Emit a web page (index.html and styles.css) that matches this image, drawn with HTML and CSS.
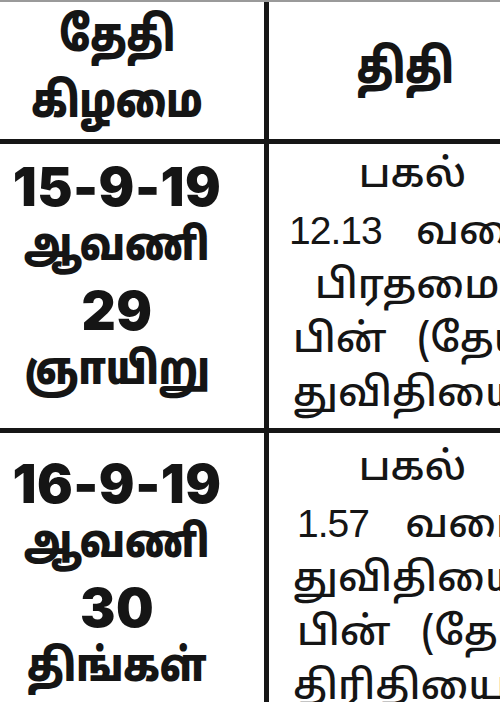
FILE: index.html
```html
<!DOCTYPE html>
<html lang="ta">
<head>
<meta charset="utf-8">
<title>தேதி திதி</title>
<link rel="stylesheet" href="styles.css">
</head>
<body>
<div class="sheet">
  <div class="row head">
    <div class="cell left">
      <div class="hd"><span class="sq">தேதி</span></div>
      <div class="hd"><span class="sq">கிழமை</span></div>
    </div>
    <div class="cell right">
      <div class="hd"><span class="sq">திதி</span></div>
    </div>
  </div>
  <div class="row body first">
    <div class="cell left">
      <div class="num">15-9-19</div>
      <div class="tb"><span class="sq">ஆவணி</span></div>
      <div class="num">29</div>
      <div class="tb"><span class="sq">ஞாயிறு</span></div>
    </div>
    <div class="cell right">
      <div class="tr ctr">பகல்</div>
      <div class="tr wide"><span class="dg">12.13</span> வரை</div>
      <div class="tr ind">பிரதமை</div>
      <div class="tr mid">பின் (தேய்பிறை)</div>
      <div class="tr">துவிதியை</div>
    </div>
  </div>
  <div class="row body last">
    <div class="cell left">
      <div class="num">16-9-19</div>
      <div class="tb"><span class="sq">ஆவணி</span></div>
      <div class="num">30</div>
      <div class="tb"><span class="sq">திங்கள்</span></div>
    </div>
    <div class="cell right">
      <div class="tr ctr">பகல்</div>
      <div class="tr wider nudge"><span class="dg">1.57</span> வரை</div>
      <div class="tr">துவிதியை</div>
      <div class="tr mid nudge">பின் (தேய்பிறை)</div>
      <div class="tr">திரிதியை</div>
    </div>
  </div>
</div>
</body>
</html>
```
FILE: styles.css
```css
html, body {
  margin: 0;
  padding: 0;
  background: #fff;
  overflow: hidden;
}
body {
  width: 500px;
  height: 702px;
  color: #151515;
  font-family: "Noto Sans Tamil", "Lohit Tamil", "FreeSans", "Noto Sans", sans-serif;
}
.sheet {
  width: 560px;
  border-top: 2px solid #9a9a9a;
}
.row {
  display: grid;
  grid-template-columns: 264px 292px;
}
.head {
  height: 137px;
  border-bottom: 5px solid #161616;
}
.body {
  height: 284px;
  border-bottom: 5px solid #161616;
}
.last {
  border-bottom: none;
}
.cell {
  display: flex;
  flex-direction: column;
}
.left {
  align-items: center;
  padding-right: 30px;
  text-align: center;
}
.right {
  border-left: 5px solid #161616;
}
.head .cell {
  justify-content: center;
}
.head .left {
  padding-top: 2px;
}
.head .right {
  align-items: center;
  padding-right: 14px;
}
.sq {
  display: inline-block;
  transform: scaleX(0.84);
  white-space: nowrap;
}
.hd {
  font-weight: 900;
  font-size: 48px;
  line-height: 66px;
}
.hd .sq {
  transform: scaleX(0.78);
}
.body .left {
  padding-top: 12px;
}
.last .left {
  padding-top: 20px;
}
.num {
  font-family: "Inter", "Liberation Sans", sans-serif;
  font-weight: 900;
  font-size: 53px;
  line-height: 62px;
  letter-spacing: 0.5px;
}
.tb {
  font-weight: 900;
  font-size: 45px;
  line-height: 62px;
}
.body .right {
  padding-top: 6px;
  padding-left: 24px;
}
.last .right {
  padding-top: 10px;
}
.tr {
  font-size: 40px;
  font-weight: 500;
  line-height: 54px;
  white-space: nowrap;
}
.ctr {
  text-align: center;
  margin-left: -24px;
}
.ind {
  padding-left: 22px;
}
.wide {
  word-spacing: 24px;
  margin-left: -4px;
}
.wider {
  word-spacing: 26px;
}
.mid {
  word-spacing: 20px;
}
.nudge {
  padding-left: 4px;
}
.dg {
  font-family: "Liberation Sans", sans-serif;
  font-size: 39px;
  font-weight: 400;
  letter-spacing: -1px;
  word-spacing: normal;
}
```
